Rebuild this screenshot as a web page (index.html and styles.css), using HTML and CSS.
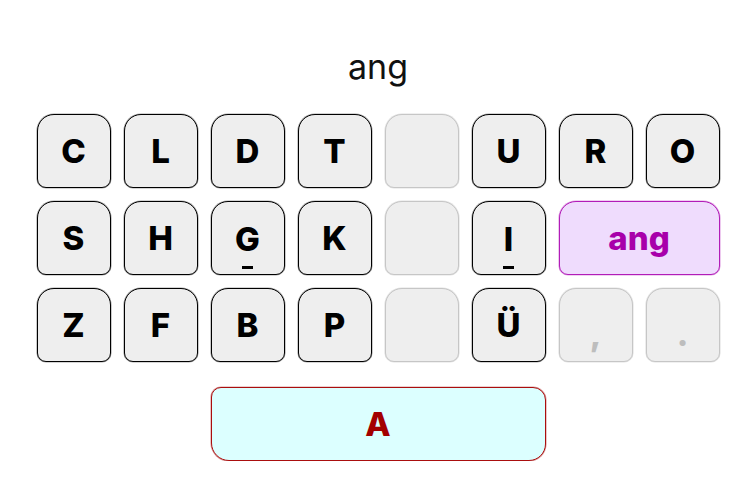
FILE: index.html
```html
<!DOCTYPE html>
<html lang="de">
<head>
<meta charset="utf-8">
<title>Keyboard</title>
<link rel="stylesheet" href="styles.css">
</head>
<body>
<main class="app">
  <div class="title">ang</div>
  <div class="keyboard">
    <div class="key">C</div>
    <div class="key">L</div>
    <div class="key">D</div>
    <div class="key">T</div>
    <div class="key off"></div>
    <div class="key">U</div>
    <div class="key">R</div>
    <div class="key">O</div>

    <div class="key">S</div>
    <div class="key">H</div>
    <div class="key mark"><span>G</span><i class="bar"></i></div>
    <div class="key">K</div>
    <div class="key off"></div>
    <div class="key mark"><span>I</span><i class="bar"></i></div>
    <div class="key wide sel">ang</div>

    <div class="key">Z</div>
    <div class="key">F</div>
    <div class="key">B</div>
    <div class="key">P</div>
    <div class="key off"></div>
    <div class="key">Ü</div>
    <div class="key off punct">,</div>
    <div class="key off punct">.</div>

    <div class="vowel">A</div>
  </div>
</main>
</body>
</html>
```

FILE: styles.css
```css
html, body {
  margin: 0;
  padding: 0;
  background: #fff;
}
.app {
  display: flex;
  flex-direction: column;
  align-items: center;
  padding-top: 47px;
  font-family: "Inter", "Liberation Sans", sans-serif;
}
.title {
  font-size: 34px;
  line-height: 40px;
  font-weight: 400;
  color: #111;
  margin-bottom: 27px;
}
.keyboard {
  display: grid;
  grid-template-columns: repeat(8, 74px);
  grid-template-rows: repeat(3, 74px) 86px;
  gap: 13px;
}
.key {
  box-sizing: border-box;
  display: flex;
  align-items: center;
  justify-content: center;
  background: #eeeeee;
  border: 1px solid #000;
  box-shadow: 0 0 0 0.6px rgba(0, 0, 0, 0.35);
  border-radius: 17px 17px 9px 9px;
  font-size: 33px;
  font-weight: 800;
  color: #000;
}
.key.off {
  border-color: #c6c6c6;
  box-shadow: 0 0 0 0.6px rgba(198, 198, 198, 0.5);
  color: #bdbdbd;
}
.key.punct {
  padding-top: 18px;
}
.key.wide {
  grid-column: span 2;
}
.key.sel {
  background: #efdcfd;
  border-color: #b21cb8;
  box-shadow: 0 0 0 0.6px rgba(178, 28, 184, 0.4);
  color: #a800aa;
}
.key.mark {
  flex-direction: column;
  padding-top: 12px;
}
.key.mark .bar {
  display: block;
  width: 11px;
  height: 3px;
  background: #000;
  margin-top: 7px;
}
.vowel {
  grid-column: 3 / span 4;
  margin-top: 12px;
  box-sizing: border-box;
  display: flex;
  align-items: center;
  justify-content: center;
  background: #dcffff;
  border: 1px solid #aa0e0e;
  box-shadow: 0 0 0 0.6px rgba(170, 14, 14, 0.4);
  border-radius: 10px 13px 17px 18px;
  font-size: 33px;
  font-weight: 800;
  color: #a30000;
}
```
